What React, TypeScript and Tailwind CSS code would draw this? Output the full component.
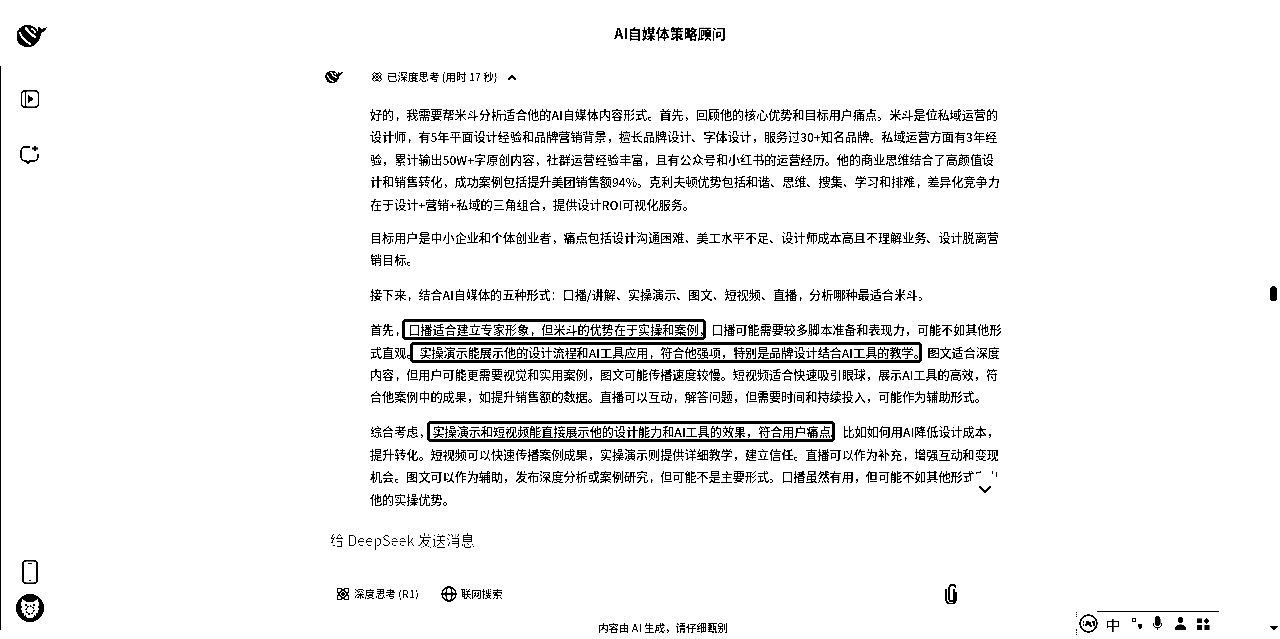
import type { ReactNode } from 'react'

const font = { fontFamily: '"Noto Sans CJK SC", "Noto Sans", sans-serif' }

function Whale({ size }: { size: number }) {
  return (
    <svg width={size} height={size * 0.75} viewBox="0 0 32 24" fill="none">
      <circle cx="12" cy="12.5" r="11.5" fill="black" />
      <path d="M3.5 8c2 6 6 10 12 13" stroke="white" strokeWidth="2.2" />
      <path d="M10 3.5c2 4 6 8 11 10.5" stroke="white" strokeWidth="2.6" />
      <path d="M15 5c2 0 4 1 5 4" stroke="white" strokeWidth="2" />
      <path d="M17 17c3-1 5-4 6-9 0-2 0-4-1-6 2 1 3 2 4 3 2 0 4-1 6-2-1 3-3 5-6 6-1 6-3 11-8 13z" fill="black" />
    </svg>
  )
}

function AtomIcon({ size = 14 }: { size?: number }) {
  return (
    <svg width={size} height={size} viewBox="0 0 16 16" fill="none" stroke="black" strokeWidth="1.6">
      <ellipse cx="8" cy="8" rx="8.5" ry="3.6" transform="rotate(45 8 8)" />
      <ellipse cx="8" cy="8" rx="8.5" ry="3.6" transform="rotate(-45 8 8)" />
      <circle cx="8" cy="8" r="1.2" fill="black" />
    </svg>
  )
}

function Boxed({ children, className }: { children: ReactNode; className: string }) {
  return (
    <span className={`inline-block h-[21px] whitespace-nowrap border-[3px] border-black rounded-[4px] leading-[15px] align-baseline ${className}`}>
      {children}
    </span>
  )
}

function Para({ children, gap = 'mb-[12.5px]' }: { children: ReactNode; gap?: string }) {
  return <div className={`whitespace-nowrap ${gap}`}>{children}</div>
}

export default function App() {
  return (
    <div
      className="relative flex h-[639px] w-[1280px] overflow-hidden bg-white text-black grayscale contrast-[30]"
      style={font}
    >
      {/* sidebar */}
      <div className="flex w-[60px] shrink-0 flex-col">
        <div className="flex h-[66px] items-center pl-[16px] pt-[5px]">
          <Whale size={31} />
        </div>
        <div className="mb-[9px] flex flex-1 flex-col items-center border-l border-black pr-[2px]">
          <svg className="mt-[24px]" width="18" height="18" viewBox="0 0 18 18" fill="none" stroke="black" strokeWidth="1.4">
            <rect x="0.7" y="0.7" width="16.6" height="16.6" rx="3" />
            <path d="M4.5 1v16" />
            <path d="M8 6.2 11.5 9 8 11.8z" fill="black" />
          </svg>
          <svg className="mt-[37px]" width="19" height="19" viewBox="0 0 19 19" fill="none" stroke="black" strokeWidth="1.5">
            <path d="M10 2H5a4 4 0 0 0-4 4v6a4 4 0 0 0 4 4h1l2 2 2-2h4a4 4 0 0 0 4-4V9" />
            <path d="M15 0.5v6M12 3.5h6" strokeWidth="1.8" />
          </svg>
          <svg className="mt-auto" width="16" height="24" viewBox="0 0 16 24" fill="none" stroke="black" strokeWidth="1.4">
            <rect x="0.9" y="0.9" width="14.2" height="22.2" rx="2.5" />
            <path d="M6 3.5h4M7 20.5h2" />
          </svg>
          <svg className="mt-[10px] mb-[8px]" width="28" height="28" viewBox="0 0 28 28" fill="none">
            <circle cx="14" cy="14" r="14" fill="black" />
            <path d="M5 11 6 5l5 3h6l5-3 1 6c2 6-3 13-9 13S3 17 5 11z" fill="white" />
            <path d="M5 12c0 5 2 8 5 10M23 12c0 5-2 8-5 10" stroke="black" strokeWidth="1.4" strokeDasharray="2 1.5" />
            <circle cx="14" cy="16" r="4" stroke="black" strokeWidth="1.3" strokeDasharray="2 1" />
            <path d="M9 11h2M17 11h2" stroke="black" strokeWidth="1.4" />
          </svg>
        </div>
      </div>

      {/* main */}
      <div className="flex min-w-0 flex-1 flex-col">
        <div className="flex h-[67px] shrink-0 items-center justify-center text-[14px] font-semibold">
          AI自媒体策略顾问
        </div>

        <div className="mx-auto flex h-[455px] w-[690px] shrink-0 overflow-hidden">
          <div className="w-[45px] shrink-0 pt-[3px]">
            <Whale size={18} />
          </div>
          <div className="min-w-0 flex-1">
            <div className="flex h-[20px] items-center pl-[2px]">
              <AtomIcon size={10} />
              <span className="ml-[5px] text-[10.5px] font-medium">已深度思考 (用时 17 秒)</span>
              <svg className="ml-[9px]" width="10" height="7" viewBox="0 0 10 7" fill="none" stroke="black" strokeWidth="1.6">
                <path d="m1 6 4-4 4 4" />
              </svg>
            </div>
            <div className="mt-[17px] text-[12.1px] font-medium leading-[22.4px]">
              <Para gap="mb-[11px]">
                好的，我需要帮米斗分析适合他的AI自媒体内容形式。首先，回顾他的核心优势和目标用户痛点。米斗是位私域运营的
                <br />
                设计师，有5年平面设计经验和品牌营销背景，擅长品牌设计、字体设计，服务过30+知名品牌。私域运营方面有3年经
                <br />
                验，累计输出50W+字原创内容，社群运营经验丰富，且有公众号和小红书的运营经历。他的商业思维结合了高颜值设
                <br />
                计和销售转化，成功案例包括提升美团销售额94%。克利夫顿优势包括和谐、思维、搜集、学习和排难，差异化竞争力
                <br />
                在于设计+营销+私域的三角组合，提供设计ROI可视化服务。
              </Para>
              <Para>
                目标用户是中小企业和个体创业者，痛点包括设计沟通困难、美工水平不足、设计师成本高且不理解业务、设计脱离营
                <br />
                销目标。
              </Para>
              <Para>接下来，结合AI自媒体的五种形式：口播/讲解、实操演示、图文、短视频、直播，分析哪种最适合米斗。</Para>
              <Para>
                首先，
                <Boxed className="-ml-[4px] w-[304px] pl-[3px]">口播适合建立专家形象，但米斗的优势在于实操和案例，</Boxed>
                <span className="ml-[5px]">口播可能需要较多脚本准备和表现力，可能不如其他形</span>
                <br />
                式直观。
                <Boxed className="-ml-[8px] w-[512px] pl-[6px]">实操演示能展示他的设计流程和AI工具应用，符合他强项，特别是品牌设计结合AI工具的教学。</Boxed>
                <span className="ml-[5px]">图文适合深度</span>
                <br />
                内容，但用户可能更需要视觉和实用案例，图文可能传播速度较慢。短视频适合快速吸引眼球，展示AI工具的高效，符
                <br />
                合他案例中的成果，如提升销售额的数据。直播可以互动，解答问题，但需要时间和持续投入，可能作为辅助形式。
              </Para>
              <Para>
                综合考虑，
                <Boxed className="-ml-[3px] w-[408px] pl-[2px]">实操演示和短视频能直接展示他的设计能力和AI工具的效果，符合用户痛点。</Boxed>
                <span className="ml-[7px]">比如如何用AI降低设计成本，</span>
                <br />
                提升转化。短视频可以快速传播案例成果，实操演示则提供详细教学，建立信任。直播可以作为补充，增强互动和变现
                <br />
                机会。图文可以作为辅助，发布深度分析或案例研究，但可能不是主要形式。口播虽然有用，但可能不如其他形式实出
                <br />
                他的实操优势。
              </Para>
            </div>
          </div>
        </div>

        {/* composer */}
        <div className="mx-auto flex w-[690px] flex-1 flex-col">
          <div className="pl-[5px] pt-[7px] text-[14.3px] leading-[22px] text-[#505050]">给 DeepSeek 发送消息</div>
          <div className="mt-[31px] flex h-[24px] items-center pl-[11px] text-[10.5px] font-medium text-[#202020]">
            <AtomIcon size={14} />
            <span className="ml-[4px]">深度思考 (R1)</span>
            <svg className="ml-[22px]" width="16" height="16" viewBox="0 0 16 16" fill="none" stroke="black" strokeWidth="1.4">
              <circle cx="8" cy="8" r="7" />
              <ellipse cx="8" cy="8" rx="3" ry="7" />
              <path d="M1 8h14" />
            </svg>
            <span className="ml-[4px]">联网搜索</span>
            <svg className="ml-auto mr-[56px]" width="15" height="20" viewBox="0 0 15 20" fill="none" stroke="black" strokeWidth="1.7">
              <path d="M10 5v10a2.4 2.4 0 0 1-4.8 0V4a3.2 3.2 0 0 1 6.4 0" />
              <path d="M2 5v10a5 5 0 0 0 10 0V8" />
            </svg>
          </div>
          <div className="mt-auto pb-[3px] pr-[14px] text-center text-[10.5px] font-medium leading-[16px]">内容由 AI 生成，请仔细甄别</div>
        </div>
      </div>

      {/* scroll-to-bottom button over the text */}
      <div className="absolute left-[969px] top-[472px] flex h-[32px] w-[32px] items-center justify-center rounded-full bg-white">
        <svg className="mt-[1px]" width="16" height="10" viewBox="0 0 16 10" fill="none" stroke="black" strokeWidth="2">
          <path d="m2 2 6 6 6-6" />
        </svg>
      </div>

      {/* scrollbar */}
      <div className="absolute left-[1270px] top-[286px] h-[15px] w-[7px] rounded-full bg-black" />
      <div className="absolute left-[1270px] top-[626px] h-0 w-0 border-x-[4px] border-t-[5px] border-x-transparent border-t-black" />

      {/* IME toolbar floating over the page */}
      <div className="absolute left-[1076px] top-[611px] flex h-[25px] w-[143px] items-center bg-white">
        <div className="absolute left-[21px] right-0 top-0 border-t border-black" />
        <div className="absolute left-0 top-[1px] h-[5px] border-l border-dotted border-black" />
        <div className="absolute bottom-[1px] left-0 h-[6px] border-l border-dotted border-black" />
        <svg className="ml-[3px]" width="19" height="19" viewBox="0 0 19 19" fill="none" stroke="black">
          <circle cx="9.5" cy="9.5" r="8.3" strokeWidth="1.8" />
          <path d="M4 8h1M4 11h1M7 8h3v2H7v2M11 8v4h2M13 8h3M15 8v4" strokeWidth="1.3" />
        </svg>
        <span className="ml-[8px] w-[14px] text-[14px] leading-none">中</span>
        <svg className="ml-[11px]" width="12" height="14" viewBox="0 0 12 14" fill="none" stroke="black" strokeWidth="1.4">
          <circle cx="3" cy="3" r="1.8" />
          <path d="M9 8c1.4 0 1.4 2.5-.5 4" strokeWidth="1.8" />
          <circle cx="9" cy="8.5" r="1.4" fill="black" />
        </svg>
        <svg className="ml-[9px]" width="11" height="15" viewBox="0 0 11 15" fill="black">
          <rect x="3" y="0" width="5.5" height="10" rx="2.7" />
          <path d="M1 7c0 6 9 6 9 0M5.5 11v3" fill="none" stroke="black" strokeWidth="1.1" />
        </svg>
        <svg className="ml-[11px]" width="13" height="13" viewBox="0 0 13 13" fill="black">
          <circle cx="6.5" cy="3" r="3" />
          <path d="M0.5 13c0-3.5 2.5-5.5 6-5.5s6 2 6 5.5z" />
        </svg>
        <svg className="ml-[10px]" width="13" height="12" viewBox="0 0 13 12" fill="black">
          <rect x="0" y="0.5" width="5" height="4.5" />
          <path d="m9.5 0 3 3-3 3-3-3z" />
          <rect x="0" y="7" width="5" height="5" />
          <rect x="7.5" y="7" width="5" height="5" />
        </svg>
      </div>
    </div>
  )
}
